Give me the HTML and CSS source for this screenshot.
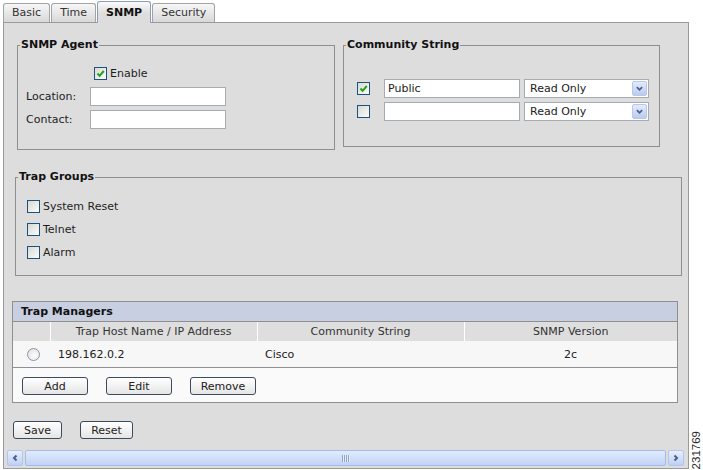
FILE: index.html
```html
<!DOCTYPE html>
<html lang="en">
<head>
    <meta charset="UTF-8">
    <title>SNMP Settings</title>
    <link rel="stylesheet" href="styles.css">
</head>
<body>
<div class="page">
    <div class="main">
        <div class="tabs">
            <div class="tab">Basic</div>
            <div class="tab">Time</div>
            <div class="tab active">SNMP</div>
            <div class="tab">Security</div>
        </div>

        <div class="panel">
            <div class="top-row">
                <fieldset class="box agent">
                    <legend>SNMP Agent</legend>
                    <div class="agent-grid">
                        <span></span>
                        <label class="check enable"><span class="cb on"><svg viewBox="0 0 11 11"><path d="M2.5 5.5 L4.6 7.8 L8.8 3"/></svg></span>Enable</label>
                        <span>Location:</span>
                        <input type="text" class="field">
                        <span>Contact:</span>
                        <input type="text" class="field">
                    </div>
                </fieldset>

                <fieldset class="box community">
                    <legend>Community String</legend>
                    <div class="community-grid">
                        <span class="cb on"><svg viewBox="0 0 11 11"><path d="M2.5 5.5 L4.6 7.8 L8.8 3"/></svg></span>
                        <input type="text" class="field" value="Public">
                        <div class="select">Read Only<span class="sel-arrow"><svg viewBox="0 0 10 8"><path d="M2 2.5 L5 5.5 L8 2.5"/></svg></span></div>
                        <span class="cb"></span>
                        <input type="text" class="field">
                        <div class="select">Read Only<span class="sel-arrow"><svg viewBox="0 0 10 8"><path d="M2 2.5 L5 5.5 L8 2.5"/></svg></span></div>
                    </div>
                </fieldset>
            </div>

            <fieldset class="box groups">
                <legend>Trap Groups</legend>
                <div class="group-list">
                    <label class="check"><span class="cb"></span>System Reset</label>
                    <label class="check"><span class="cb"></span>Telnet</label>
                    <label class="check"><span class="cb"></span>Alarm</label>
                </div>
            </fieldset>

            <div class="managers">
                <div class="managers-title">Trap Managers</div>
                <table>
                    <colgroup>
                        <col class="col-sel">
                        <col class="col-host">
                        <col class="col-comm">
                        <col>
                    </colgroup>
                    <thead>
                        <tr>
                            <th></th>
                            <th>Trap Host Name / IP Address</th>
                            <th>Community String</th>
                            <th>SNMP Version</th>
                        </tr>
                    </thead>
                    <tbody>
                        <tr>
                            <td class="sel"><span class="radio"></span></td>
                            <td>198.162.0.2</td>
                            <td>Cisco</td>
                            <td class="center">2c</td>
                        </tr>
                    </tbody>
                </table>
                <div class="manager-actions">
                    <button class="btn wide">Add</button>
                    <button class="btn wide">Edit</button>
                    <button class="btn wide">Remove</button>
                </div>
            </div>

            <div class="form-actions">
                <button class="btn save">Save</button>
                <button class="btn reset">Reset</button>
            </div>

            <div class="hscroll">
                <span class="sb-btn"><svg viewBox="0 0 8 8"><path d="M5.5 1.5 L3 4 L5.5 6.5"/></svg></span>
                <div class="sb-thumb"><span class="grip"></span></div>
                <span class="sb-btn"><svg viewBox="0 0 8 8"><path d="M2.5 1.5 L5 4 L2.5 6.5"/></svg></span>
            </div>
        </div>
    </div>
    <div class="fig-id">231769</div>
</div>
</body>
</html>
```

FILE: styles.css
```css
* { box-sizing: border-box; }
body { margin: 0; background: #fff; font-family: "DejaVu Sans", Verdana, sans-serif; font-size: 11px; color: #1e1e1e; }

.page { display: flex; align-items: flex-end; width: 703px; height: 470px; padding: 1px 0 1px 3px; }
.main { width: 686px; }

/* tabs */
.tabs { display: flex; align-items: flex-end; height: 21px; gap: 1px; }
.tab {
    height: 19px;
    padding: 0 8px;
    border: 1px solid #a3a3a3;
    border-bottom: none;
    border-radius: 3px 3px 0 0;
    background: linear-gradient(#f7f7f7, #d8d8d8);
    line-height: 17px;
    color: #333;
}
.tab.active {
    position: relative;
    z-index: 1;
    height: 22px;
    margin-bottom: -1px;
    border-color: #8d9db5;
    background: linear-gradient(#fbfbfb, #dddddd 55%);
    font-weight: bold;
    line-height: 21px;
    color: #111;
}

.panel { height: 447px; border: 1px solid #9a9a9a; background: #dddddd; }

/* fieldsets */
.box { margin: 0; padding: 0; min-width: 0; border: 1px solid #8f8f8f; }
.box legend { margin-left: 2px; padding: 0 1px; font-weight: bold; line-height: 14px; color: #111; }

.top-row { display: flex; align-items: flex-start; gap: 8px; margin: 15px 0 0 13px; }
.agent { width: 318px; }
.community { width: 317px; }

.agent-grid {
    display: grid;
    grid-template-columns: 64px 136px;
    grid-auto-rows: 19px;
    row-gap: 4px;
    align-items: center;
    margin: 12px 0 20px 8px;
}
.community-grid {
    display: grid;
    grid-template-columns: 27px 140px 125px;
    grid-auto-rows: 19px;
    row-gap: 4px;
    align-items: center;
    margin: 27px 0 25px 13px;
}

.field {
    width: 136px;
    height: 19px;
    margin: 0;
    padding: 0 3px;
    border: 1px solid #a5acb2;
    background: #fff;
    font: inherit;
    color: #222;
}

.select {
    position: relative;
    width: 125px;
    height: 19px;
    padding-left: 5px;
    border: 1px solid #a5acb2;
    background: #fff;
    line-height: 17px;
    color: #222;
}
.sel-arrow {
    position: absolute;
    top: 1px;
    right: 1px;
    width: 15px;
    height: 15px;
    border: 1px solid #b8c8e8;
    border-radius: 2px;
    background: linear-gradient(#e4ecfc, #b9cbf0);
    display: flex;
    align-items: center;
    justify-content: center;
}
.sel-arrow svg { width: 9px; height: 7px; fill: none; stroke: #4a5f8a; stroke-width: 2; }

/* checkboxes */
.check { display: flex; align-items: center; gap: 3px; }
.enable { padding-left: 4px; }
.cb {
    display: inline-flex;
    width: 13px;
    height: 13px;
    border: 1px solid #1c5180;
    background: linear-gradient(135deg, #d9d9d3, #fbfbf9);
}
.cb svg { width: 11px; height: 11px; fill: none; stroke: #21a121; stroke-width: 2; }

.groups { width: 667px; margin: 20px 0 0 11px; }
.group-list { display: flex; flex-direction: column; gap: 4px; margin: 13px 0 13px 11px; }
.group-list .check { height: 19px; }

/* trap managers */
.managers { width: 666px; margin: 25px 0 0 8px; border: 1px solid #8f8f8f; }
.managers-title {
    height: 20px;
    padding-left: 8px;
    border-bottom: 1px solid #8f8f8f;
    background: #c7cfe1;
    font-weight: bold;
    line-height: 20px;
    color: #111;
}
table { width: 100%; border-collapse: collapse; table-layout: fixed; }
.col-sel { width: 37px; }
.col-host { width: 207px; }
.col-comm { width: 207px; }
th {
    height: 19px;
    padding: 0;
    border-left: 1px solid #fff;
    background: #dedede;
    font-weight: normal;
    color: #333;
}
th:first-child { border-left: none; }
td { height: 26px; padding: 0 0 0 8px; background: #f7f7f7; color: #222; }
td.sel { padding: 0 0 0 14px; }
td.center { padding: 0; text-align: center; }
.radio {
    display: block;
    width: 13px;
    height: 13px;
    border: 1px solid #8796a8;
    border-radius: 50%;
    background: radial-gradient(circle at 60% 65%, #fff, #dcdcdc);
}

.manager-actions {
    display: flex;
    gap: 18px;
    height: 35px;
    padding: 9px 0 0 9px;
    border-top: 1px solid #8f8f8f;
    background: #fafafa;
}

.btn {
    height: 18px;
    margin: 0;
    padding: 0;
    border: 1px solid #3d4b5c;
    border-radius: 3px;
    background: linear-gradient(#ffffff, #e5e5e5);
    font: inherit;
    color: #222;
}
.btn.wide { width: 66px; }
.btn.save { width: 49px; }
.btn.reset { width: 53px; }

.form-actions { display: flex; gap: 18px; margin: 18px 0 0 9px; }

/* horizontal scrollbar */
.hscroll { display: flex; gap: 2px; width: 677px; height: 16px; margin: 11px 0 0 3px; }
.sb-btn {
    display: flex;
    align-items: center;
    justify-content: center;
    width: 16px;
    height: 16px;
    border: 1px solid #b3c5ea;
    border-radius: 2px;
    background: linear-gradient(#e8effd, #bdd0f5);
}
.sb-btn svg { width: 8px; height: 8px; fill: none; stroke: #4a5f8a; stroke-width: 2; }
.sb-thumb {
    flex: 1;
    display: flex;
    align-items: center;
    justify-content: center;
    border: 1px solid #a6bbe4;
    border-radius: 2px;
    background: linear-gradient(#e2ebfd, #c0d3f6);
}
.grip { width: 8px; height: 7px; background: repeating-linear-gradient(90deg, #8ea5d3 0 1px, #e6eefd 1px 2px); }

.fig-id {
    width: 14px;
    writing-mode: vertical-rl;
    transform: rotate(180deg);
    font-family: "Liberation Sans", Arial, sans-serif;
    font-size: 11.5px;
    line-height: 14px;
    color: #2a2a2a;
}
```
